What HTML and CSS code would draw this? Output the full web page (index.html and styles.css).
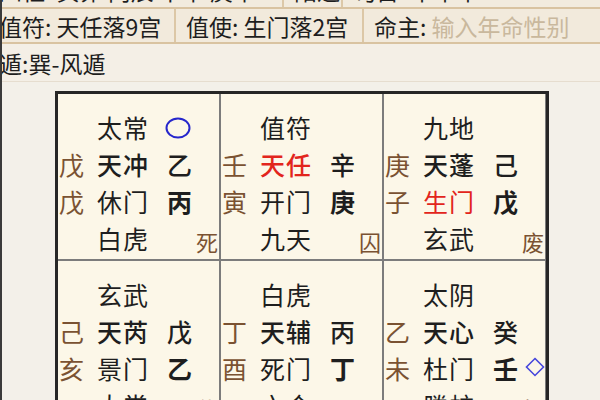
FILE: index.html
```html
<!DOCTYPE html>
<html lang="zh">
<head>
<meta charset="utf-8">
<title>奇门遁甲</title>
<link rel="stylesheet" href="styles.css">
</head>
<body>
<div class="info">
  <div class="row row-a">
    <div class="c a1">四柱: 癸卯 丙辰 甲午 庚午</div>
    <div class="c a2">阳遁</div>
    <div class="c a3">旬首: 甲午辛</div>
  </div>
  <div class="row row-b">
    <div class="c b1">值符: 天任落9宫</div>
    <div class="c b2">值使: 生门落2宫</div>
    <div class="c b3">命主: <span class="ph">输入年命性别</span></div>
  </div>
  <div class="row row-c">
    <div class="c">遁:巽-风遁</div>
  </div>
</div>

<div class="board">
  <div class="cell">
    <div class="line"><span class="l"></span><span class="m">太常</span><span class="r"><svg class="circle" width="26" height="22" viewBox="0 0 26 22"><ellipse cx="13" cy="11" rx="11.5" ry="9.5" fill="none" stroke="#2626cc" stroke-width="2"/></svg></span></div>
    <div class="line"><span class="l">戊</span><span class="m k">天冲</span><span class="r k">乙</span></div>
    <div class="line"><span class="l">戊</span><span class="m">休门</span><span class="r b">丙</span></div>
    <div class="line"><span class="l"></span><span class="m">白虎</span><span class="r"></span></div>
    <span class="corner">死</span>
  </div>
  <div class="cell">
    <div class="line"><span class="l"></span><span class="m">值符</span><span class="r"></span></div>
    <div class="line"><span class="l">壬</span><span class="m k red">天任</span><span class="r k">辛</span></div>
    <div class="line"><span class="l">寅</span><span class="m">开门</span><span class="r b">庚</span></div>
    <div class="line"><span class="l"></span><span class="m">九天</span><span class="r"></span></div>
    <span class="corner">囚</span>
  </div>
  <div class="cell">
    <div class="line"><span class="l"></span><span class="m">九地</span><span class="r"></span></div>
    <div class="line"><span class="l">庚</span><span class="m k">天蓬</span><span class="r k">己</span></div>
    <div class="line"><span class="l">子</span><span class="m red">生门</span><span class="r b">戊</span></div>
    <div class="line"><span class="l"></span><span class="m">玄武</span><span class="r"></span></div>
    <span class="corner">废</span>
  </div>
  <div class="cell">
    <div class="line"><span class="l"></span><span class="m">玄武</span><span class="r"></span></div>
    <div class="line"><span class="l">己</span><span class="m k">天芮</span><span class="r k">戊</span></div>
    <div class="line"><span class="l">亥</span><span class="m">景门</span><span class="r b">乙</span></div>
    <div class="line"><span class="l"></span><span class="m">太常</span><span class="r"></span></div>
    <span class="corner">休</span>
  </div>
  <div class="cell">
    <div class="line"><span class="l"></span><span class="m">白虎</span><span class="r"></span></div>
    <div class="line"><span class="l">丁</span><span class="m k">天辅</span><span class="r k">丙</span></div>
    <div class="line"><span class="l">酉</span><span class="m">死门</span><span class="r b">丁</span></div>
    <div class="line"><span class="l"></span><span class="m">六合</span><span class="r"></span></div>
    <span class="corner">旺</span>
  </div>
  <div class="cell">
    <div class="line"><span class="l"></span><span class="m">太阴</span><span class="r"></span></div>
    <div class="line"><span class="l">乙</span><span class="m k">天心</span><span class="r k">癸</span></div>
    <div class="line"><span class="l">未</span><span class="m">杜门</span><span class="r b">壬<svg class="diamond" width="20" height="20" viewBox="0 0 20 20"><polygon points="10,1.5 18.5,10 10,18.5 1.5,10" fill="none" stroke="#4646dc" stroke-width="1.6"/></svg></span></div>
    <div class="line"><span class="l"></span><span class="m">螣蛇</span><span class="r"></span></div>
    <span class="corner">相</span>
  </div>
</div>
</body>
</html>
```

FILE: styles.css
```css
html, body {
  margin: 0;
  padding: 0;
}
body {
  width: 600px;
  height: 400px;
  box-sizing: border-box;
  overflow: hidden;
  background: #f3f0e9;
  border-left: 2px solid #3a3a3a;
  font-family: "Noto Sans CJK SC", "Noto Sans", sans-serif;
  color: #1e1e1e;
}

.info {
  margin-left: -13px;
  margin-top: -28px;
  width: 620px;
}
.row {
  display: flex;
  box-sizing: border-box;
}
.c {
  box-sizing: border-box;
  font-size: 23px;
  padding: 0 10px;
  white-space: nowrap;
  overflow: hidden;
}
.row-a {
  height: 35px;
  background: #f2ebde;
}
.row-a .c {
  height: 35px;
  line-height: 33px;
  padding-top: 2px;
  border-right: 2px solid #dcc8a8;
}
.a1 { width: 295px; }
.a2 { width: 59px; }
.a3 { flex: 1; border-right: none !important; }

.row-b {
  height: 37px;
  background: #f2eadc;
  border-top: 2px solid #d9c3a1;
  border-bottom: 2px solid #d9c3a1;
}
.row-b .c {
  line-height: 33px;
  padding-top: 1px;
  border-right: 2px solid #dcc7a6;
}
.b1 { width: 187px; }
.b2 { width: 188px; }
.b3 { flex: 1; border-right: none !important; }
.ph { color: #c9b89d; }

.row-c {
  height: 38px;
  background: #f4efe6;
  border-bottom: 1px solid #e6ddcf;
}
.row-c .c {
  line-height: 38px;
}

.board {
  margin: 9px 0 0 53px;
  width: 494px;
  box-sizing: border-box;
  border: 3px solid #262626;
  border-bottom: none;
  display: grid;
  grid-template-columns: repeat(3, 161px);
  grid-template-rows: 165px 165px;
  gap: 2px;
  background: #7c7c7c;
}
.cell {
  position: relative;
  background: #fcf7e8;
  padding-top: 15px;
  box-sizing: border-box;
}
.line {
  display: grid;
  grid-template-columns: 39px 70px 52px;
  height: 37px;
  align-items: center;
  font-size: 25px;
  line-height: 37px;
}
.l {
  color: #7a5232;
  padding-left: 1px;
}
.m {
  letter-spacing: 1px;
  white-space: nowrap;
}
.r {
  display: flex;
  align-items: center;
  white-space: nowrap;
}
.k {
  font-weight: 500;
}
.b {
  font-weight: 700;
}
.red {
  color: #e2251c;
}
.circle {
  margin-left: -2px;
}
.diamond {
  margin-left: 7px;
  margin-top: -3px;
}
.corner {
  position: absolute;
  right: 1px;
  bottom: 7px;
  font-size: 22px;
  line-height: 22px;
  color: #7a5232;
}
```
